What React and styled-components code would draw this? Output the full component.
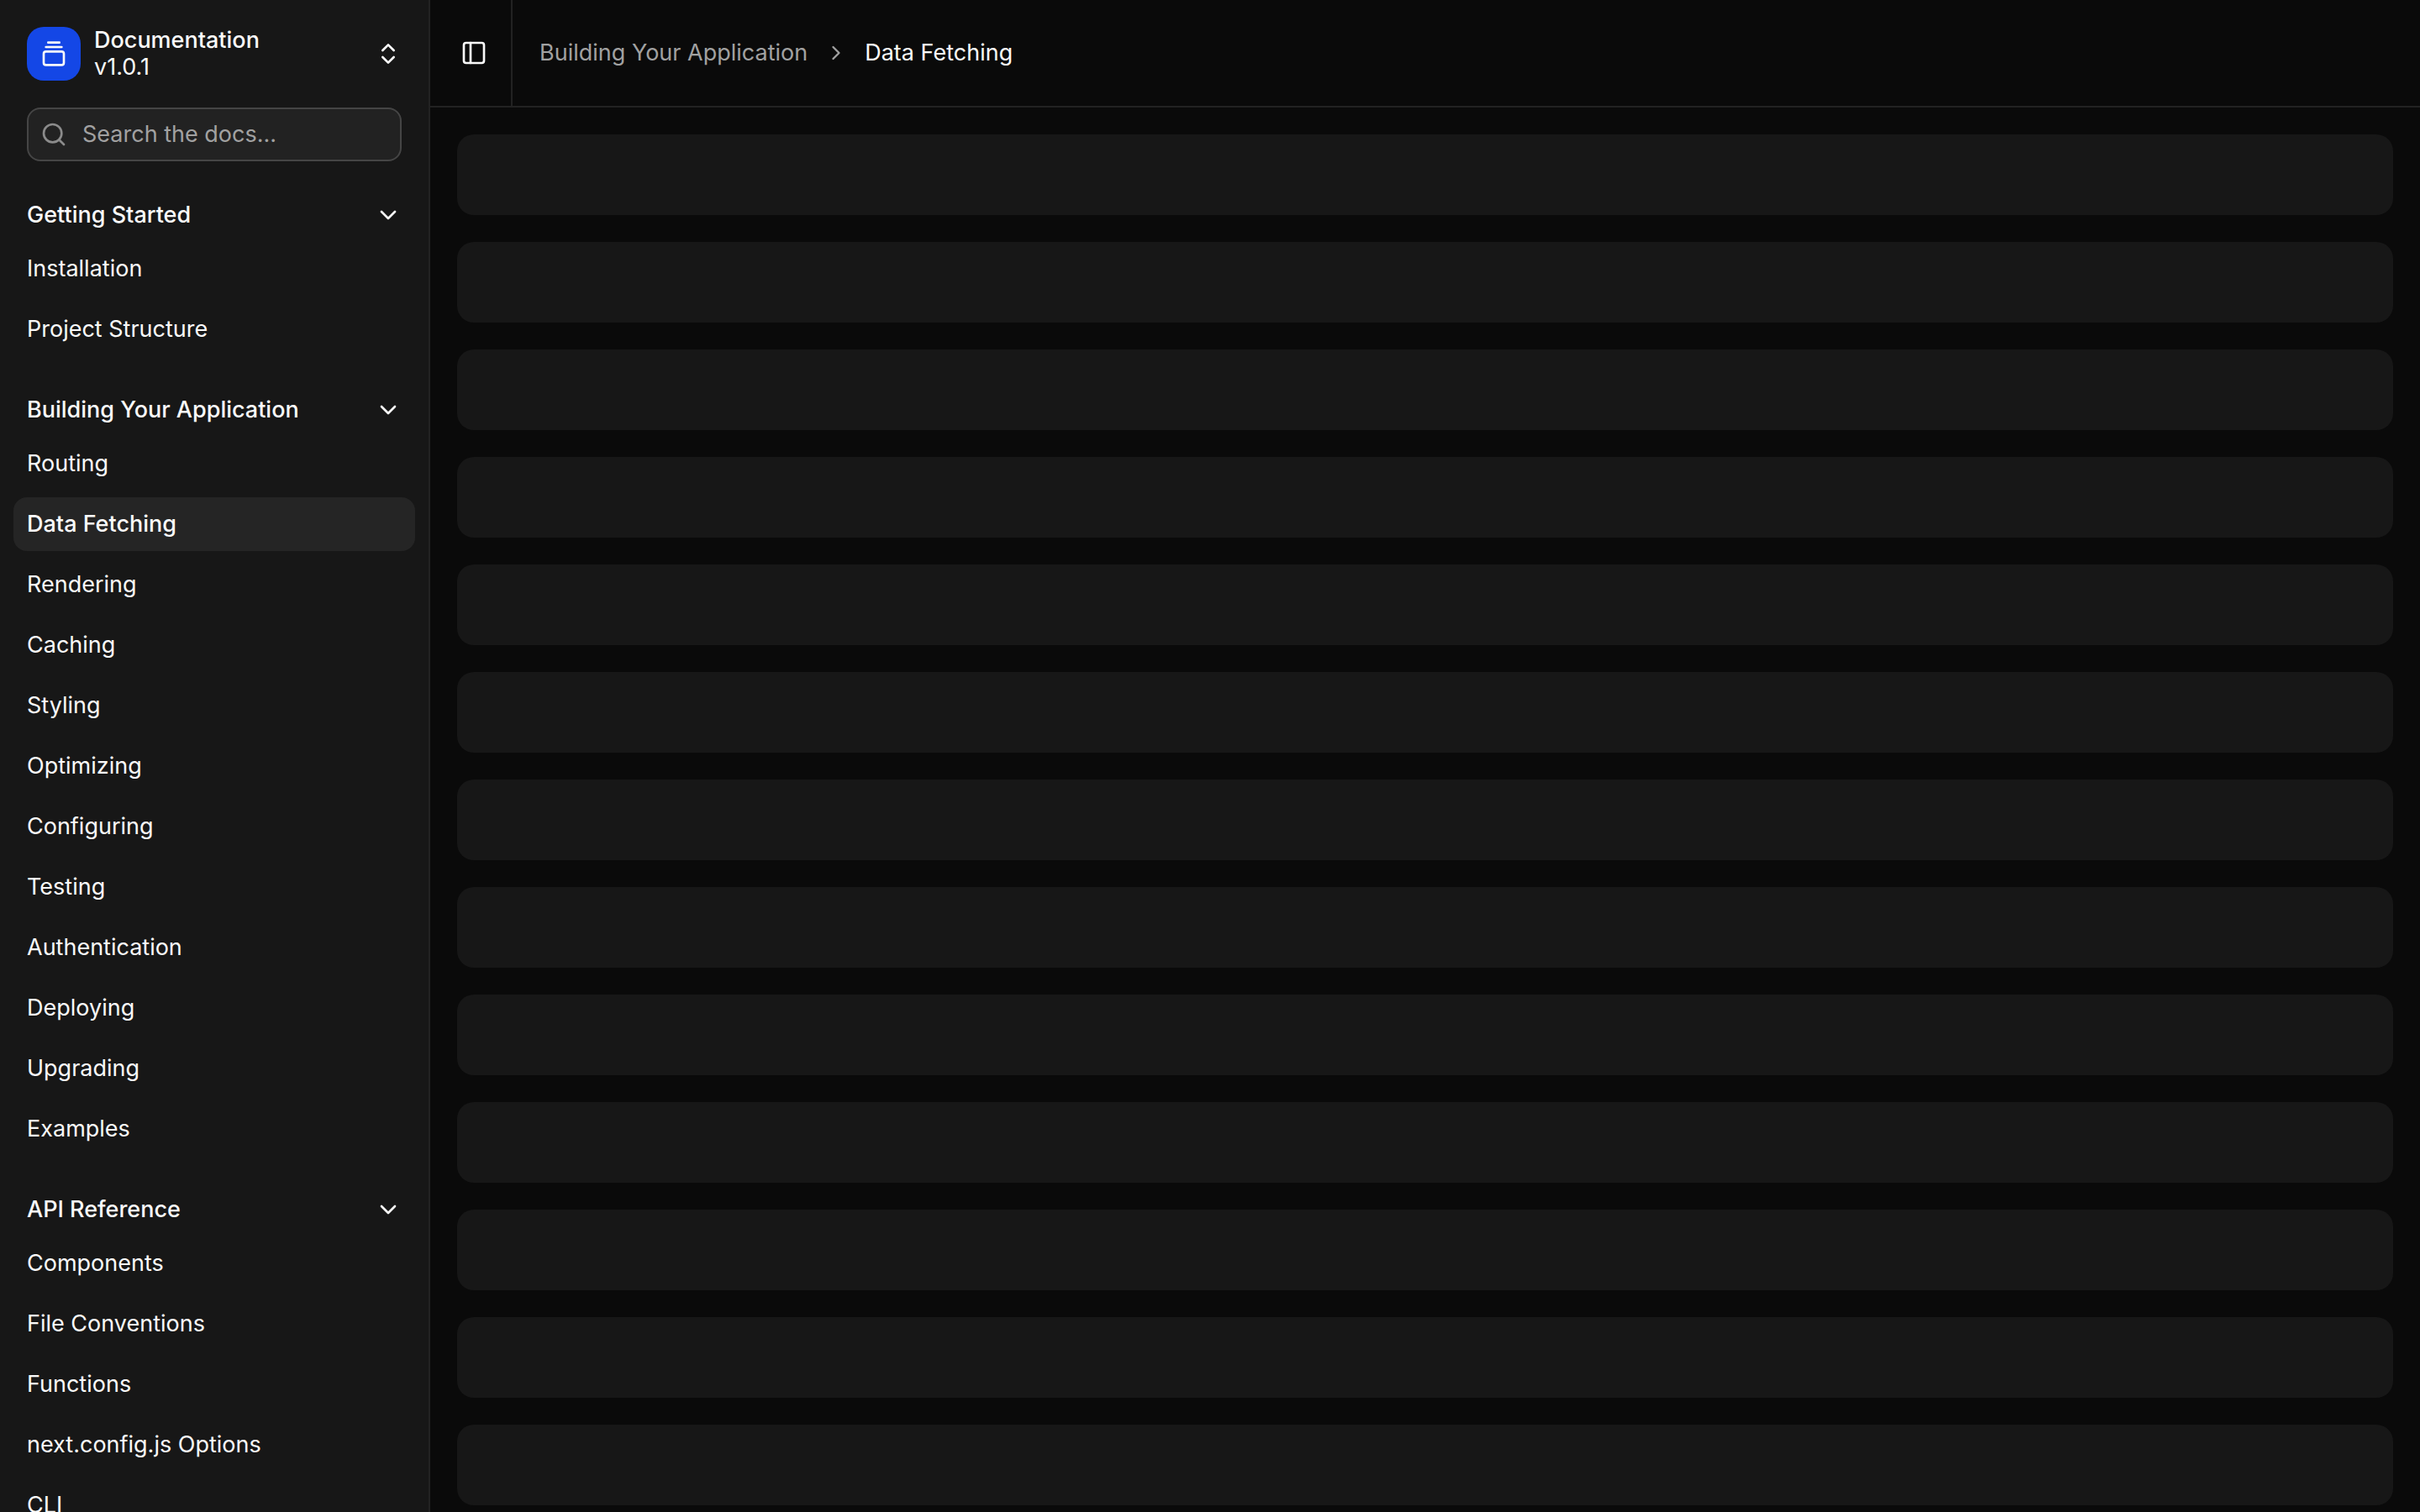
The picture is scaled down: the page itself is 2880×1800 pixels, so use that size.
import React, { useState } from "react";
import styled, { createGlobalStyle } from "styled-components";
import { GalleryVerticalEnd, ChevronsUpDown, ChevronDown, ChevronRight, Search, PanelLeft } from "lucide-react";

const GlobalStyle = createGlobalStyle`
  *, *::before, *::after { box-sizing: border-box; }
  body {
    margin: 0;
    background: #0a0a0a;
    color: #fafafa;
    font: 400 27px/40px Inter, "Liberation Sans", sans-serif;
    -webkit-font-smoothing: antialiased;
  }
  button, input { font: inherit; color: inherit; }
  button { background: none; border: 0; padding: 0; text-align: left; cursor: pointer; }
`;

const Layout = styled.div`
  display: flex;
  height: 100vh;
  overflow: hidden;
`;

const Sidebar = styled.aside`
  flex: none;
  display: ${(p) => (p.$open ? "flex" : "none")};
  flex-direction: column;
  width: 512px;
  background: #171717;
  border-right: 2px solid #222222;
`;

const SidebarHeader = styled.div`
  display: flex;
  flex-direction: column;
  gap: 16px;
  padding: 16px;
`;

const VersionButton = styled.button`
  display: flex;
  align-items: center;
  gap: 16px;
  height: 96px;
  padding: 16px;
  border-radius: 16px;
`;

const Logo = styled.span`
  display: flex;
  align-items: center;
  justify-content: center;
  width: 64px;
  height: 64px;
  border-radius: 20px;
  background: #1447e6;
`;

const VersionText = styled.span`
  flex: 1;
  display: flex;
  flex-direction: column;
  gap: 4px;
  line-height: 28px;
`;

const ProductName = styled.span`
  font-weight: 500;
`;

const SearchBox = styled.label`
  display: flex;
  align-items: center;
  gap: 18px;
  height: 64px;
  margin: 0 16px;
  padding: 0 14px;
  border: 2px solid #454545;
  border-radius: 16px;
  background: #222222;
  color: #8b8b8b;
`;

const SearchInput = styled.input`
  flex: 1;
  min-width: 0;
  padding: 0;
  border: 0;
  outline: 0;
  background: none;
  color: #fafafa;
  &::placeholder { color: #a1a1a1; opacity: 1; }
`;

const Nav = styled.nav`
  flex: 1;
  min-height: 0;
  overflow-y: auto;
  scrollbar-width: none;
`;

const Group = styled.section`
  padding: 16px;
`;

const GroupToggle = styled.button`
  display: flex;
  align-items: center;
  justify-content: space-between;
  width: 100%;
  height: 64px;
  padding: 0 16px;
  font-weight: 500;
`;

const Menu = styled.ul`
  display: flex;
  flex-direction: column;
  gap: 8px;
  margin: 0;
  padding: 0;
  list-style: none;
`;

const MenuLink = styled.a`
  display: flex;
  align-items: center;
  height: 64px;
  padding: 0 16px;
  border-radius: 16px;
  color: inherit;
  text-decoration: none;
  font-weight: ${(p) => (p.$active ? 500 : 400)};
  background: ${(p) => (p.$active ? "#252525" : "transparent")};
`;

const Main = styled.main`
  flex: 1;
  min-width: 0;
  display: flex;
  flex-direction: column;
`;

const TopBar = styled.header`
  flex: none;
  display: flex;
  align-items: center;
  gap: 16px;
  height: 128px;
  padding: 0 24px;
  border-bottom: 2px solid #222222;
`;

const SidebarTrigger = styled.button`
  display: flex;
  align-items: center;
  justify-content: center;
  width: 56px;
  height: 56px;
`;

const Separator = styled.span`
  align-self: stretch;
  width: 2px;
  margin-right: 16px;
  background: #222222;
`;

const Crumbs = styled.ol`
  display: flex;
  align-items: center;
  gap: 20px;
  margin: 0;
  padding: 0;
  list-style: none;
  color: #a1a1a1;
`;

const Crumb = styled.li`
  display: flex;
  color: ${(p) => (p.$current ? "#fafafa" : "inherit")};
`;

const CrumbLink = styled.a`
  color: inherit;
  text-decoration: none;
`;

const Content = styled.div`
  flex: 1;
  min-height: 0;
  overflow-y: auto;
  scrollbar-width: none;
  display: flex;
  flex-direction: column;
  gap: 32px;
  padding: 32px;
`;

const Placeholder = styled.div`
  flex: none;
  height: 96px;
  border-radius: 20px;
  background: #171717;
`;

const sections = [
  { title: "Getting Started", items: ["Installation", "Project Structure"] },
  {
    title: "Building Your Application",
    items: [
      "Routing", "Data Fetching", "Rendering", "Caching", "Styling", "Optimizing",
      "Configuring", "Testing", "Authentication", "Deploying", "Upgrading", "Examples",
    ],
  },
  {
    title: "API Reference",
    items: ["Components", "File Conventions", "Functions", "next.config.js Options", "CLI"],
  },
];

function NavGroup({ title, items, active, onSelect }) {
  const [open, setOpen] = useState(true);
  return (
    <Group>
      <GroupToggle type="button" aria-expanded={open} onClick={() => setOpen(!open)}>
        {title}
        <ChevronDown size={32} />
      </GroupToggle>
      {open && (
        <Menu>
          {items.map((item) => (
            <li key={item}>
              <MenuLink
                href="#"
                $active={item === active}
                aria-current={item === active ? "page" : undefined}
                onClick={() => onSelect(item)}
              >
                {item}
              </MenuLink>
            </li>
          ))}
        </Menu>
      )}
    </Group>
  );
}

export default function App() {
  const [open, setOpen] = useState(true);
  const [active, setActive] = useState("Data Fetching");
  const section = sections.find((s) => s.items.includes(active));
  return (
    <>
      <GlobalStyle />
      <Layout>
        <Sidebar $open={open}>
          <SidebarHeader>
            <VersionButton type="button">
              <Logo><GalleryVerticalEnd size={32} /></Logo>
              <VersionText>
                <ProductName>Documentation</ProductName>
                <span>v1.0.1</span>
              </VersionText>
              <ChevronsUpDown size={32} />
            </VersionButton>
            <SearchBox>
              <Search size={32} />
              <SearchInput type="text" aria-label="Search" placeholder="Search the docs..." />
            </SearchBox>
          </SidebarHeader>
          <Nav>
            {sections.map((s) => (
              <NavGroup key={s.title} {...s} active={active} onSelect={setActive} />
            ))}
          </Nav>
        </Sidebar>
        <Main>
          <TopBar>
            <SidebarTrigger type="button" aria-label="Toggle Sidebar" onClick={() => setOpen(!open)}>
              <PanelLeft size={32} />
            </SidebarTrigger>
            <Separator />
            <nav aria-label="breadcrumb">
              <Crumbs>
                <Crumb><CrumbLink href="#">{section.title}</CrumbLink></Crumb>
                <Crumb aria-hidden="true"><ChevronRight size={28} /></Crumb>
                <Crumb $current aria-current="page">{active}</Crumb>
              </Crumbs>
            </nav>
          </TopBar>
          <Content>
            {Array.from({ length: 13 }, (_, i) => <Placeholder key={i} />)}
          </Content>
        </Main>
      </Layout>
    </>
  );
}
